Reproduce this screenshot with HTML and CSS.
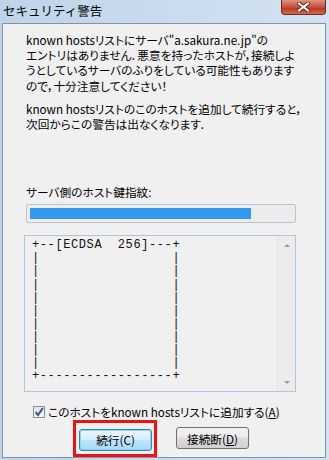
FILE: index.html
```html
<!DOCTYPE html>
<html lang="ja">
<head>
  <meta charset="utf-8"/>
  <title>セキュリティ警告</title>
  <link rel="stylesheet" href="styles.css">
</head>
<body>
  <div class="window">
    <div class="titlebar">
      <span class="title">セキュリティ警告</span>
      <div class="close">
        <svg width="13" height="10" viewBox="0 0 13 10">
          <path d="M2 1.5 L11 8.5 M11 1.5 L2 8.5" stroke="#5b1d15" stroke-width="4" stroke-linecap="square"/>
          <path d="M2 1.5 L11 8.5 M11 1.5 L2 8.5" stroke="#ffffff" stroke-width="2.2" stroke-linecap="square"/>
        </svg>
      </div>
    </div>

    <div class="client">
      <p class="msg">known hostsリストにサーバ"a.sakura.ne.jp"の<br>エントリはありません．悪意を持ったホストが，接続しよ<br>うとしているサーバのふりをしている可能性もあります<br>ので，十分注意してください！</p>
      <p class="msg second">known hostsリストのこのホストを追加して続行すると，<br>次回からこの警告は出なくなります．</p>

      <div class="label">サーバ側のホスト鍵指紋:</div>
      <div class="progress"><div class="fill"></div></div>

      <div class="art">
        <pre class="art-text">+--[ECDSA  256]---+
|                 |
|                 |
|                 |
|                 |
|                 |
|                 |
|                 |
|                 |
|                 |
+-----------------+</pre>
        <div class="scrollbar">
          <span class="arrow up"></span>
          <span class="arrow down"></span>
        </div>
      </div>

      <div class="check">
        <span class="box">
          <svg width="10" height="10" viewBox="0 0 10 10">
            <path d="M1.5 5 L4 8 L8.8 1.2" fill="none" stroke="#3b5998" stroke-width="2"/>
          </svg>
        </span>
        <span>このホストをknown hostsリストに追加する(<u>A</u>)</span>
      </div>

      <div class="buttons">
        <div class="mark">
          <button class="btn default">続行(C)</button>
        </div>
        <button class="btn">接続断(<u>D</u>)</button>
      </div>
    </div>
  </div>
</body>
</html>
```

FILE: styles.css
```css
body {
  margin: 0;
  font-family: "Noto Sans CJK JP", sans-serif;
  color: #000;
}
.window {
  width: 329px;
  height: 460px;
  display: flex;
  flex-direction: column;
  background: linear-gradient(to right, #bfd4ea, #d3e2f2);
}
.titlebar {
  height: 23px;
  display: flex;
  align-items: flex-start;
  flex-shrink: 0;
}
.title {
  font-size: 12.5px;
  line-height: 14px;
  padding: 4px 0 0 3px;
}
.close {
  margin-left: auto;
  margin-right: 3px;
  width: 45px;
  height: 15px;
  box-sizing: border-box;
  border: 1px solid #6a2a22;
  border-top: none;
  border-radius: 0 0 4px 4px;
  background: linear-gradient(#e2907f, #c9503d 50%, #b93a26 60%, #d66a4f);
  display: flex;
  align-items: center;
  justify-content: center;
}
.client {
  flex: 1;
  margin: 0 3px 3px 2px;
  background: #f0f0f0;
  border: 1px solid #8493a3;
  padding-top: 8px;
}
.msg {
  margin: 0;
  padding-left: 23px;
  font-size: 11.7px;
  line-height: 15.2px;
  white-space: nowrap;
  font-feature-settings: "palt";
}
.msg.second {
  margin-top: 8px;
}
.label {
  margin: 53px 0 0 23px;
  font-size: 11.7px;
  line-height: 15px;
  font-feature-settings: "palt";
}
.progress {
  margin: 5px 0 0 23px;
  width: 270px;
  height: 19px;
  box-sizing: border-box;
  border: 1px solid #b9c3cd;
  border-radius: 2px;
  background: #ececec;
  padding: 3px;
}
.fill {
  width: 221px;
  height: 11px;
  background: #3399f0;
}
.art {
  margin: 12px 0 0 21px;
  width: 272px;
  height: 157px;
  box-sizing: border-box;
  border: 1px solid #b6c3d1;
  display: flex;
}
.art-text {
  flex: 1;
  margin: 0;
  padding: 3px 0 0 7px;
  font-family: "Liberation Mono", monospace;
  font-size: 12px;
  letter-spacing: 0.6px;
  line-height: 13.1px;
  color: #111;
}
.scrollbar {
  width: 17px;
  border-left: 1px solid #e6e6e6;
  background: #ececec;
  display: flex;
  flex-direction: column;
  justify-content: space-between;
  align-items: center;
  padding: 8px 0 7px;
}
.arrow {
  width: 0;
  height: 0;
  border-left: 3px solid transparent;
  border-right: 3px solid transparent;
}
.arrow.up {
  border-bottom: 3px solid #9a9a9a;
}
.arrow.down {
  border-top: 3px solid #9a9a9a;
}
.check {
  margin: 12px 0 0 30px;
  display: flex;
  align-items: center;
  gap: 3px;
  font-size: 11.7px;
  line-height: 15px;
  white-space: nowrap;
  font-feature-settings: "palt";
}
.box {
  width: 12px;
  height: 12px;
  box-sizing: border-box;
  border: 1px solid #8e8f8f;
  background: linear-gradient(#e4e4e4, #fafafa);
  display: flex;
  align-items: center;
  justify-content: center;
}
.buttons {
  margin: 1px 0 0 70px;
  display: flex;
  align-items: center;
  gap: 19px;
}
.mark {
  border: 3px solid #ee1111;
  padding: 3px 2px 3px 3px;
}
.btn {
  width: 73px;
  height: 22px;
  padding: 0;
  font-family: "Noto Sans CJK JP", sans-serif;
  font-size: 11.7px;
  font-feature-settings: "palt";
  color: #000;
  border: 1px solid #707070;
  border-radius: 3px;
  background: linear-gradient(#f2f2f2, #ebebeb 45%, #dddddd 50%, #cfcfcf);
}
.btn.default {
  border-color: #3c7fb1;
  background: linear-gradient(#eaf6fd, #d9f0fc 45%, #bee6fd 50%, #a7d9f5);
  box-shadow: inset 0 0 0 1px #8fd3f5;
}
```
